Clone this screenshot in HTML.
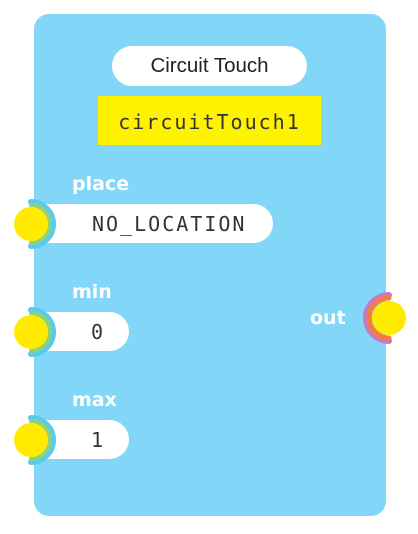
<!DOCTYPE html>
<html><head><style>
body{margin:0;width:418px;height:534px;background:#fff;position:relative;overflow:hidden;font-family:"DejaVu Sans","Liberation Sans",sans-serif}
.panel{position:absolute;left:34px;top:14px;width:352px;height:502px;background:#82d6f7;border-radius:15px}
.title{position:absolute;left:112px;top:46px;width:195px;height:40px;background:#fff;border-radius:20px;text-align:center;line-height:40px;font-size:20.5px;color:#222;font-family:"Liberation Sans",sans-serif}
.yb{position:absolute;left:98px;top:96px;width:223px;height:49px;background:#fff200;text-align:center;line-height:52px;font-family:"DejaVu Sans Mono","Liberation Mono",monospace;font-size:20px;letter-spacing:2px;color:#333}
.lbl{position:absolute;left:72px;color:#fff;font-size:19px;font-weight:bold}
.inp{position:absolute;left:40px;height:39px;background:#fff;border-radius:0 20px 20px 0;font-family:"DejaVu Sans Mono","Liberation Mono",monospace;font-size:20px;letter-spacing:2px;color:#333;line-height:40px}
svg{position:absolute}
</style></head><body>
<div class="panel"></div>
<div class="title">Circuit Touch</div>
<div class="yb">circuitTouch1</div>
<div class="lbl" style="top:173px">place</div>
<div class="inp" style="top:204px;width:233px"><span style="margin-left:52px">NO_LOCATION</span></div>
<div class="lbl" style="top:281px">min</div>
<div class="inp" style="top:312px;width:89px"><span style="margin-left:51px">0</span></div>
<div class="lbl" style="top:389px">max</div>
<div class="inp" style="top:420px;width:89px"><span style="margin-left:51px">1</span></div>
<div class="lbl" style="left:310px;top:307px">out</div>
<svg width="418" height="534" style="left:0;top:0">
<defs>
<g id="ip">
<path d="M31 202 A22 22 0 0 1 31 246" fill="none" stroke="#5ac8f0" stroke-width="6" stroke-linecap="round"/>
<path d="M31 205 A19 19 0 0 1 31 243" fill="none" stroke="#8ad37a" stroke-width="4" stroke-linecap="round"/>
<circle cx="31" cy="224" r="17" fill="#ffea00"/>
</g>
</defs>
<use href="#ip"/>
<use href="#ip" transform="translate(0,108)"/>
<use href="#ip" transform="translate(0,216)"/>
<path d="M389 295 A23 23 0 0 0 389 341" fill="none" stroke="#c57ac8" stroke-width="6" stroke-linecap="round"/>
<path d="M389 298 A20 20 0 0 0 389 338" fill="none" stroke="#f47c3c" stroke-width="5" stroke-linecap="round"/>
<circle cx="389" cy="318" r="17" fill="#ffea00"/>
</svg>
</body></html>
